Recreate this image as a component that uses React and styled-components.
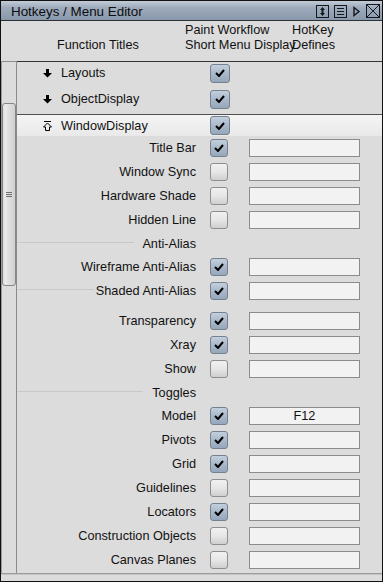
import styled, { createGlobalStyle } from 'styled-components'

const Global = createGlobalStyle`
    * { box-sizing: border-box; }
    body {
        margin: 0;
        background: #dcdcdc;
        font-family: "Liberation Sans", Arial, sans-serif;
        font-size: 12.7px;
        color: #111;
    }
`

const Window = styled.div`
    width: 383px;
    height: 582px;
    border: 1px solid #111;
    background-color: #dcdcdc;
    display: flex;
    flex-direction: column;
    overflow: hidden;
`

const TitleBar = styled.div`
    height: 20px;
    flex: none;
    display: flex;
    align-items: center;
    padding: 1px 2px 0 10px;
    background: linear-gradient(to bottom, #c3ccd7 0%, #9eabbb 35%, #8898ab 100%);
    border-bottom: 1px solid #2e3238;
`
const Title = styled.span`
    flex: 1;
    font-size: 13.4px;
    color: #0c0c10;
`
const Tools = styled.div`
    display: flex;
    align-items: center;
    gap: 5px;
    svg { display: block; }
`

const Header = styled.div`
    height: 40px;
    flex: none;
    display: grid;
    grid-template-columns: 184px 107px 1fr;
    padding-top: 2px;
    line-height: 15px;
    white-space: nowrap;
    p { margin: 0; }
    .titles { padding: 15px 0 0 56px; }
`

const Body = styled.div`
    flex: 1;
    display: flex;
    min-height: 0;
`
const Track = styled.div`
    width: 16px;
    flex: none;
    border-top: 1px solid #8e8e8e;
    border-left: 1px solid #9a9a9a;
    border-right: 1px solid #8a8a8a;
    padding-top: 41px;
`
const Thumb = styled.div`
    height: 183px;
    border: 1px solid #868686;
    border-radius: 3px;
    background: linear-gradient(to right, #dadada 0%, #ececec 18%, #e2e2e2 40%, #d0d0d0 100%);
    display: flex;
    flex-direction: column;
    align-items: center;
    justify-content: center;
    gap: 1px;
    span {
        width: 6px;
        height: 1px;
        background: #6e6e6e;
    }
`

const Content = styled.div`
    flex: 1;
    border-top: 1px solid #333;
    display: flex;
    flex-direction: column;
`

const GroupRow = styled.div`
    height: 22px;
    flex: none;
    margin-bottom: ${p => (p.$active ? '0' : '4px')};
    display: flex;
    align-items: center;
    padding-left: 26px;
    border-top: ${p => (p.$active ? '1px solid #505050' : 'none')};
    background: ${p => (p.$active ? 'linear-gradient(to bottom, #f4f4f4, #e9e9e9)' : 'transparent')};
    svg { display: block; flex: none; }
`
const GroupName = styled.span`
    width: 158px;
    padding-left: 9px;
    white-space: nowrap;
`

const SubRow = styled.div`
    height: ${p => p.$h}px;
    flex: none;
    display: flex;
    align-items: center;
`
const Label = styled.span`
    width: 179px;
    text-align: right;
    white-space: nowrap;
`
const HeadLabel = styled.span`
    width: 179px;
    display: flex;
    align-items: center;
    white-space: nowrap;
    &::before {
        content: '';
        flex: 1;
        height: 1px;
        margin: -2px ${p => p.$gap}px 0 0;
        background: #c8c8c8;
    }
`

const Box = styled.span`
    flex: none;
    width: ${p => (p.$big ? 20 : 18)}px;
    height: ${p => (p.$big ? 19 : 18)}px;
    margin-left: ${p => (p.$big ? 0 : 14)}px;
    border: 1px solid ${p => (p.$on ? '#77818d' : '#8e8e8e')};
    border-radius: 3px;
    background: ${p => (p.$on
        ? 'linear-gradient(to bottom, #c2cfdd 0%, #a9b9ca 50%, #95a7ba 100%)'
        : 'linear-gradient(to bottom, #f1f1f1 0%, #e6e6e6 50%, #cfcfcf 100%)')};
    display: flex;
    align-items: center;
    justify-content: center;
`

const Field = styled.span`
    width: 111px;
    height: 18px;
    margin-left: 21px;
    border: 1px solid #8c8c8c;
    background: #f2f2f2;
    text-align: center;
    line-height: 16px;
`

const Footer = styled.div`
    height: 8px;
    flex: none;
    border-top: 1px solid #9c9c9c;
    box-shadow: inset 0 1px 0 #c4c4c4;
`

const Check = ({ on, big }) => (
    <Box $on={on} $big={big}>
        {on ? (
            <svg width="10" height="8" viewBox="0 0 10 8">
                <path d="M1 4 L4 7 L9 1" stroke="#000" strokeWidth="2" fill="none" />
            </svg>
        ) : null}
    </Box>
)

const DownArrow = () => (
    <svg width="9" height="9" viewBox="0 0 9 9">
        <path d="M3 0 H6 V4 H9 L4.5 8.5 L0 4 H3 Z" fill="#000" />
    </svg>
)

const CollapseArrow = () => (
    <svg width="9" height="10" viewBox="0 0 9 10">
        <path d="M1 0.5 H8" stroke="#000" strokeWidth="1" />
        <path d="M4.5 2 L8.5 6 H6.5 V9.5 H2.5 V6 H0.5 Z" stroke="#000" strokeWidth="1" fill="none" />
    </svg>
)

const groups = [
    { name: 'Layouts', on: true },
    { name: 'ObjectDisplay', on: true },
]

const items = [
    { label: 'Title Bar', on: true },
    { label: 'Window Sync' },
    { label: 'Hardware Shade' },
    { label: 'Hidden Line' },
    { heading: 'Anti-Alias', gap: 8 },
    { label: 'Wireframe Anti-Alias', on: true },
    { label: 'Shaded Anti-Alias', on: true, rule: 2 },
    { spacer: true },
    { label: 'Transparency', on: true },
    { label: 'Xray', on: true },
    { label: 'Show' },
    { heading: 'Toggles', gap: 9 },
    { label: 'Model', on: true, hotkey: 'F12' },
    { label: 'Pivots', on: true },
    { label: 'Grid', on: true },
    { label: 'Guidelines' },
    { label: 'Locators', on: true },
    { label: 'Construction Objects' },
    { label: 'Canvas Planes' },
]

const App = () => {
    return (
        <Window>
            <Global />
            <TitleBar>
                <Title>Hotkeys / Menu Editor</Title>
                <Tools>
                    <svg width="13" height="13" viewBox="0 0 13 13">
                        <rect x="0.5" y="0.5" width="12" height="12" fill="none" stroke="#15181d" />
                        <path d="M6.5 2 L9 5 H4 Z M6.5 11 L9 8 H4 Z" fill="#15181d" />
                        <path d="M6.5 4 V9" stroke="#15181d" strokeWidth="2" />
                    </svg>
                    <svg width="13" height="13" viewBox="0 0 13 13">
                        <rect x="0.5" y="0.5" width="12" height="12" fill="none" stroke="#15181d" />
                        <path d="M3 3.5 H10 M3 6.5 H10 M3 9.5 H10" stroke="#15181d" />
                    </svg>
                    <svg width="9" height="13" viewBox="0 0 9 13">
                        <path d="M2 2.5 L7 6.5 L2 10.5 Z" fill="none" stroke="#15181d" strokeWidth="1.4" />
                    </svg>
                    <svg width="14" height="14" viewBox="0 0 14 14">
                        <rect x="0.5" y="0.5" width="13" height="13" fill="none" stroke="#15181d" />
                        <path d="M1 1 L13 13 M13 1 L1 13" stroke="#15181d" />
                    </svg>
                </Tools>
            </TitleBar>
            <Header>
                <p className="titles">Function Titles</p>
                <div>
                    <p>Paint Workflow</p>
                    <p>Short Menu Display</p>
                </div>
                <div>
                    <p>HotKey</p>
                    <p>Defines</p>
                </div>
            </Header>
            <Body>
                <Track>
                    <Thumb>
                        <span />
                        <span />
                        <span />
                    </Thumb>
                </Track>
                <Content>
                    {groups.map(g => (
                        <GroupRow key={g.name}>
                            <DownArrow />
                            <GroupName>{g.name}</GroupName>
                            <Check on={g.on} big />
                        </GroupRow>
                    ))}
                    <GroupRow $active>
                        <CollapseArrow />
                        <GroupName>WindowDisplay</GroupName>
                        <Check on big />
                    </GroupRow>
                    {items.map((it, i) => {
                        if (it.spacer) return <SubRow key={i} $h={7} />
                        if (it.heading) {
                            return (
                                <SubRow key={i} $h={23}>
                                    <HeadLabel $gap={it.gap}>{it.heading}</HeadLabel>
                                </SubRow>
                            )
                        }
                        return (
                            <SubRow key={i} $h={it.rule ? 23 : 24}>
                                {it.rule
                                    ? <HeadLabel $gap={it.rule}>{it.label}</HeadLabel>
                                    : <Label>{it.label}</Label>}
                                <Check on={it.on} />
                                <Field>{it.hotkey}</Field>
                            </SubRow>
                        )
                    })}
                </Content>
            </Body>
            <Footer />
        </Window>
    )
}

export default App
